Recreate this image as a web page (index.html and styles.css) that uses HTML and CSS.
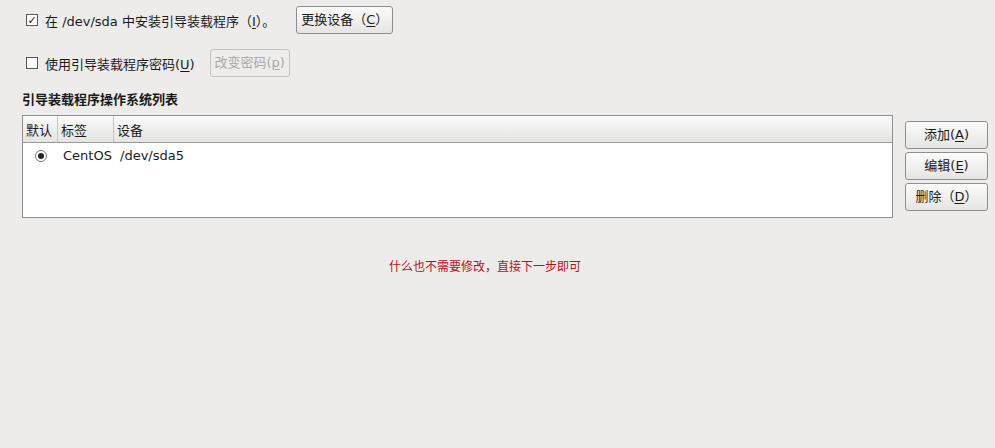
FILE: index.html
```html
<!DOCTYPE html>
<html lang="zh-CN">
<head>
<meta charset="utf-8">
<link rel="stylesheet" href="styles.css">
</head>
<body>
<div class="page">
  <div class="row row1">
    <label class="check"><span class="box checked">✓</span><span class="label">在 /dev/sda 中安装引导装载程序（<u>I</u>）。</span></label>
    <button class="btn btn-change">更换设备（<u>C</u>）</button>
  </div>
  <div class="row row2">
    <label class="check"><span class="box"></span><span class="label">使用引导装载程序密码(<u>U</u>)</span></label>
    <button class="btn btn-disabled" disabled>改变密码(<u>p</u>)</button>
  </div>
  <div class="heading">引导装载程序操作系统列表</div>
  <div class="listarea">
    <div class="table">
      <div class="thead">
        <div class="th c1">默认</div>
        <div class="th c2">标签</div>
        <div class="th c3">设备</div>
      </div>
      <div class="tr">
        <div class="td c1"><span class="radio"><span class="dot"></span></span></div>
        <div class="td c2">CentOS</div>
        <div class="td c3">/dev/sda5</div>
      </div>
    </div>
    <div class="side">
      <button class="btn sbtn">添加(<u>A</u>)</button>
      <button class="btn sbtn">编辑(<u>E</u>)</button>
      <button class="btn sbtn">删除（<u>D</u>）</button>
    </div>
  </div>
  <div class="note">什么也不需要修改，直接下一步即可</div>
</div>
</body>
</html>
```
FILE: styles.css
```css
html, body {
  margin: 0;
  padding: 0;
  background: #edeceb;
}
body {
  width: 995px;
  height: 448px;
  overflow: hidden;
  font-family: "DejaVu Sans", "Noto Sans CJK SC", sans-serif;
  font-size: 13px;
  color: #1a1a1a;
}
.page {
  padding: 6px 7px 0 22px;
}
.row {
  display: flex;
  align-items: center;
}
.row1 { height: 28px; }
.row2 { height: 28px; margin-top: 15px; }
.check {
  display: flex;
  align-items: center;
  padding-left: 4px;
  white-space: nowrap;
}
.box {
  width: 10px;
  height: 10px;
  border: 1px solid #555;
  background: #fff;
  display: inline-flex;
  align-items: center;
  justify-content: center;
  font-size: 11px;
  line-height: 1;
  color: #222;
  margin-right: 7px;
}
.row1 .btn-change { margin-left: 21px; }
.row2 .btn-disabled { margin-left: 15px; }
u { text-decoration: underline; text-underline-offset: 2px; }
.btn {
  font-family: "DejaVu Sans", "Noto Sans CJK SC", sans-serif;
  font-size: 13px;
  color: #1a1a1a;
  height: 28px;
  line-height: 26px;
  padding: 0;
  border: 1px solid #8e8e8e;
  border-radius: 3px;
  background: linear-gradient(#fbfbfb, #e6e5e4);
  display: inline-block;
  text-align: center;
  white-space: nowrap;
  box-sizing: border-box;
}
.btn-change { width: 97px; }
.btn-disabled {
  width: 80px;
  color: #a9a8a6;
  border-color: #c4c3c1;
  background: #eeedec;
}
.heading {
  font-weight: bold;
  margin-top: 15px;
  height: 16px;
  line-height: 16px;
}
.listarea {
  display: flex;
  align-items: flex-start;
  margin-top: 7px;
}
.table {
  width: 871px;
  height: 103px;
  border: 1px solid #8f8f8f;
  background: #fff;
  box-sizing: border-box;
}
.thead {
  display: flex;
  height: 27px;
  border-bottom: 1px solid #9a9a9a;
  background: linear-gradient(#fafafa, #e4e4e3);
  box-sizing: border-box;
}
.th {
  display: flex;
  align-items: center;
  padding-left: 3px;
  border-right: 1px solid #c6c6c6;
  box-sizing: border-box;
  height: 100%;
}
.th.c3 { border-right: none; flex: 1; }
.c1 { width: 35px; }
.c2 { width: 56px; }
.c3 { flex: 1; }
.tr {
  display: flex;
  height: 24px;
  align-items: center;
}
.td { padding-left: 5px; box-sizing: border-box; }
.td.c1 { display: flex; justify-content: center; padding-left: 0; padding-top: 1px; }
.td.c2 { padding-left: 5px; }
.td.c3 { padding-left: 6px; }
.radio {
  width: 10px;
  height: 10px;
  border: 1px solid #777;
  border-radius: 50%;
  display: inline-flex;
  align-items: center;
  justify-content: center;
  background: #fff;
  margin-left: 1px;
}
.dot {
  width: 6px;
  height: 6px;
  border-radius: 50%;
  background: #222;
}
.side {
  display: flex;
  flex-direction: column;
  gap: 3px;
  margin-left: 12px;
  margin-top: 6px;
}
.sbtn { width: 83px; }
.note {
  text-align: center;
  color: #b0141c;
  font-size: 12px;
  margin-top: 39px;
  padding-right: 40px;
}
```
